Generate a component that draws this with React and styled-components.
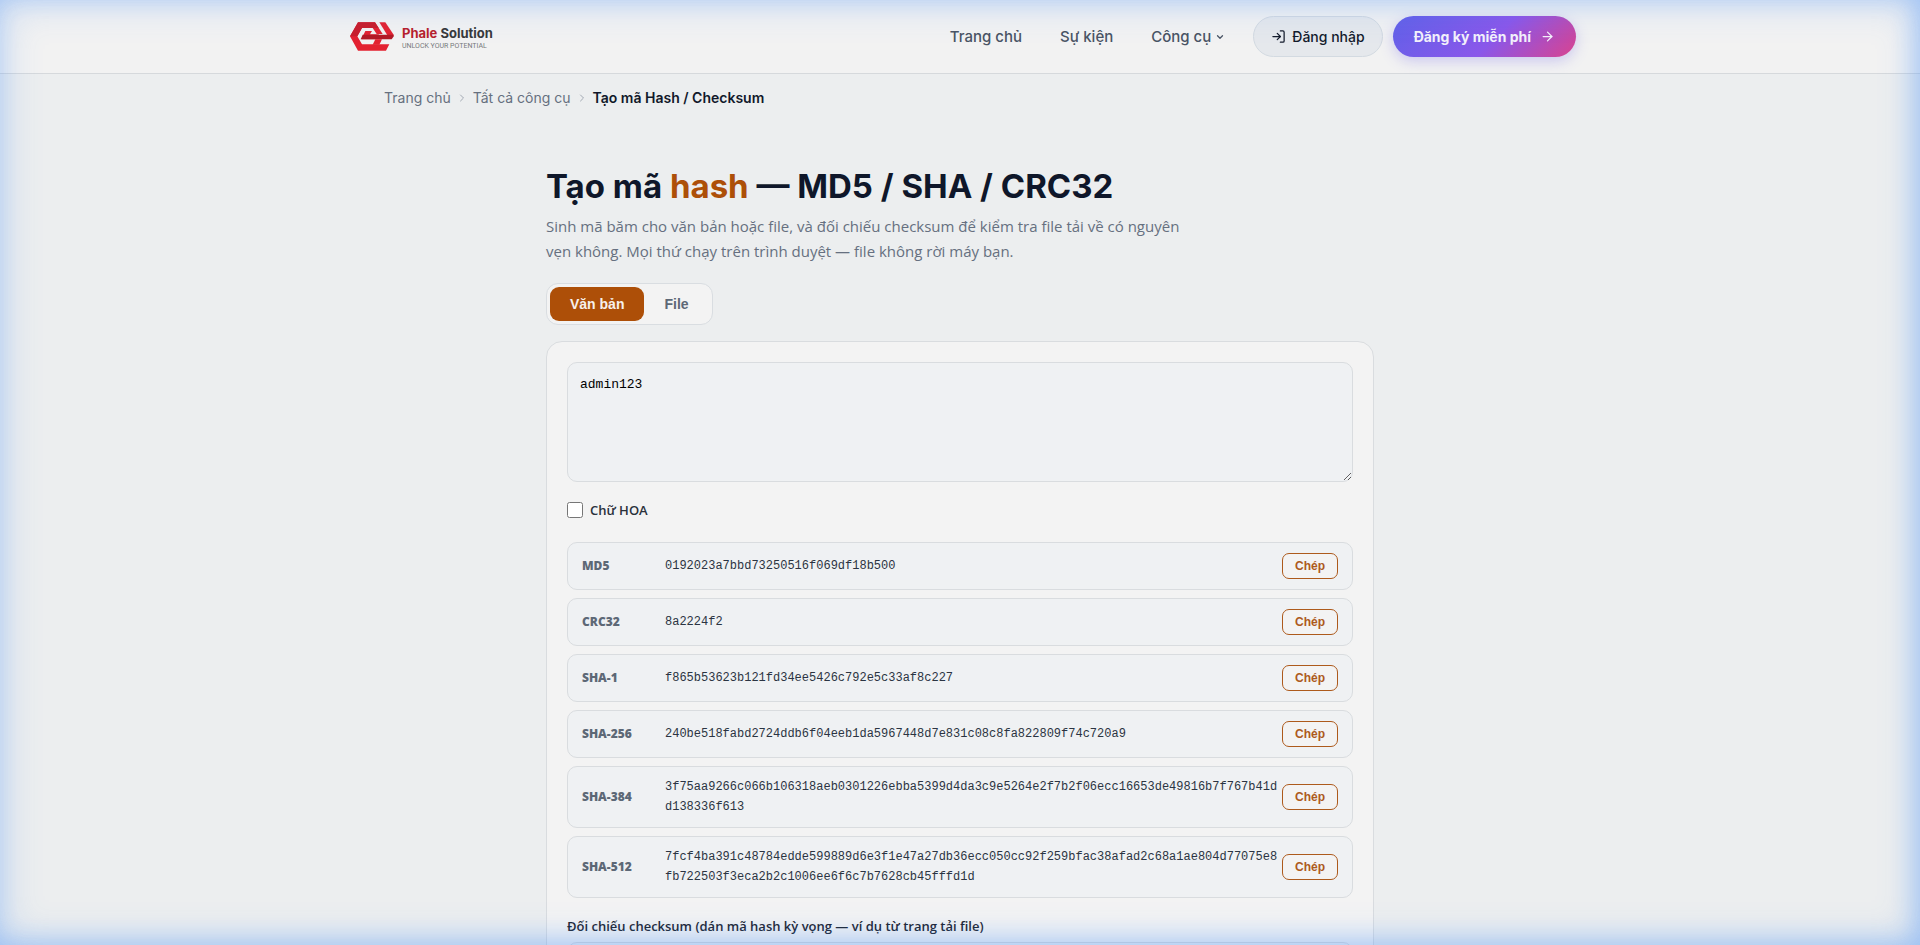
import React, { useState } from "react";
import styled, { createGlobalStyle, css } from "styled-components";
import { ArrowRight, ChevronDown, ChevronRight, LogIn } from "lucide-react";

const brand = "Inter, 'Open Sans', sans-serif";
const body = "'Open Sans', 'Noto Sans', sans-serif";
const arial = "'Liberation Sans', Arial, sans-serif";
const mono = "'Liberation Mono', 'DejaVu Sans Mono', monospace";

const GlobalStyle = createGlobalStyle`
  *, *::before, *::after { box-sizing: border-box; }
  body { margin: 0; background: #eceeef; color: #1e2530; font-family: ${body}; overflow: hidden; }
  a { color: inherit; text-decoration: none; }
`;

const Page = styled.div`
  height: 100vh;
  overflow: hidden;
`;

const Glow = styled.div`
  position: fixed;
  inset: 0;
  pointer-events: none;
  box-shadow:
    inset 0 0 40px rgba(66, 140, 246, 0.3),
    inset -6px -4px 24px rgba(76, 148, 250, 0.3);
`;

const Header = styled.header`
  background: #f2f2f2;
  border-bottom: 1px solid #d6d9dc;
`;

const HeaderInner = styled.div`
  max-width: 1280px;
  height: 73px;
  margin: 0 auto;
  padding: 0 24px;
  display: flex;
  align-items: center;
  justify-content: space-between;
  font-family: ${brand};
`;

const Logo = styled.a`
  display: flex;
  align-items: center;
  gap: 8px;
  padding-left: 6px;
`;

const LogoText = styled.span`
  display: flex;
  flex-direction: column;
  gap: 2px;
  padding-top: 2px;
`;

const LogoName = styled.span`
  font: 700 13px/14px ${brand};
  color: #38393b;
  em { font-style: normal; color: #b81f2c; }
`;

const LogoTag = styled.span`
  font: 400 7px/8px Roboto, sans-serif;
  color: #77797c;
`;

const Nav = styled.nav`
  display: flex;
  align-items: center;
`;

const NavLink = styled.a`
  display: flex;
  align-items: center;
  gap: 4px;
  margin-right: 38px;
  font-size: 15px;
  font-weight: 500;
  color: #4a5464;
  &:last-of-type { margin-right: 28px; }
`;

const Pill = styled.button`
  height: 41px;
  display: flex;
  align-items: center;
  border-radius: 21px;
  font: 500 14px/20px ${brand};
  color: #141b2b;
  background: #e5e8ec;
  border: 1px solid #d3dae1;
  padding: 0 17px;
  gap: 6px;
  ${(p) => p.$primary && css`
    margin-left: 10px;
    border: 0;
    padding: 0 21px;
    gap: 9px;
    font-weight: 700;
    color: #f3f1fb;
    background: linear-gradient(135deg, #6161e8 0%, #8a57ea 55%, #d9438f 100%);
    box-shadow: 0 4px 14px rgba(99, 91, 235, 0.28);
  `}
`;

const Crumbs = styled.nav`
  max-width: 1200px;
  margin: 0 auto;
  padding: 14px 24px;
  display: flex;
  align-items: center;
  gap: 5px;
  font: 400 14px/20px ${brand};
  color: #66707f;
  svg { color: #a2a9b3; }
  strong { font-weight: 600; color: #11182a; }
`;

const Main = styled.main`
  max-width: 876px;
  margin: 0 auto;
  padding: 44px 24px 0;
`;

const Title = styled.h1`
  margin: 0;
  font: 700 33px/40px ${brand};
  color: #0f172a;
  em { font-style: normal; color: #ad4f08; }
`;

const Lead = styled.p`
  max-width: 660px;
  margin: 8px 0 19px;
  font-size: 15px;
  line-height: 25px;
  color: #667080;
`;

const Tabs = styled.div`
  display: inline-flex;
  padding: 3px;
  border: 1px solid #d9dde1;
  border-radius: 12px;
  background: #f3f3f3;
`;

const Tab = styled.button`
  height: 34px;
  padding: 0 20px;
  border: 0;
  border-radius: 9px;
  font: 700 14px/20px ${arial};
  color: ${(p) => (p.$active ? "#f7f1ec" : "#5d6876")};
  background: ${(p) => (p.$active ? "#ad4f08" : "transparent")};
`;

const Card = styled.section`
  margin-top: 16px;
  padding: 20px;
  border: 1px solid #d9dcdf;
  border-radius: 16px;
  background: #f3f3f3;
`;

const TextBox = styled.textarea`
  display: block;
  width: 100%;
  height: 120px;
  padding: 12px;
  border: 1px solid #d9dcdf;
  border-radius: 10px;
  background: #eff1f3;
  font: 400 13px/20px ${mono};
  color: #000;
  resize: vertical;
  outline: 0;
`;

const CheckLabel = styled.label`
  display: flex;
  align-items: center;
  gap: 7px;
  margin: 18px 0 22px;
  font-size: 13px;
  font-weight: 600;
  line-height: 20px;
  color: #2a313c;
  input { width: 16px; height: 16px; margin: 0; }
`;

const List = styled.div`
  display: flex;
  flex-direction: column;
  gap: 8px;
`;

const Row = styled.div`
  display: grid;
  grid-template-columns: 83px 1fr auto;
  align-items: center;
  padding: 10px 14px;
  border: 1px solid #d9dcdf;
  border-radius: 10px;
  background: #eff1f3;
`;

const Algo = styled.span`
  font-size: 12px;
  font-weight: 800;
  line-height: 20px;
  color: #5d6876;
`;

const Hash = styled.code`
  font: 400 12px/20px ${mono};
  color: #2b3442;
  word-break: break-all;
`;

const Copy = styled.button`
  width: 56px;
  height: 26px;
  padding: 0;
  border: 1px solid #ad5a1c;
  border-radius: 7px;
  background: #f3f3f3;
  font: 700 12px/16px ${arial};
  color: #ad5a1c;
`;

const FieldLabel = styled.label`
  display: block;
  margin: 18px 0 6px;
  font-size: 13px;
  font-weight: 600;
  line-height: 20px;
`;

const Field = styled.input`
  width: 100%;
  height: 44px;
  padding: 0 12px;
  border: 1px solid #d9dcdf;
  border-radius: 10px;
  background: #eff1f3;
  font: 400 13px/20px ${mono};
`;

const hashes = [
  ["MD5", "0192023a7bbd73250516f069df18b500"],
  ["CRC32", "8a2224f2"],
  ["SHA-1", "f865b53623b121fd34ee5426c792e5c33af8c227"],
  ["SHA-256", "240be518fabd2724ddb6f04eeb1da5967448d7e831c08c8fa822809f74c720a9"],
  ["SHA-384", "3f75aa9266c066b106318aeb0301226ebba5399d4da3c9e5264e2f7b2f06ecc16653de49816b7f767b41dd138336f613"],
  ["SHA-512", "7fcf4ba391c48784edde599889d6e3f1e47a27db36ecc050cc92f259bfac38afad2c68a1ae804d77075e8fb722503f3eca2b2c1006ee6f6c7b7628cb45fffd1d"],
];

function LogoMark() {
  return (
    <svg width="44" height="29" viewBox="0 0 132 87" aria-hidden="true">
      <path d="M24 1H75L98 36H80L68 18H36L22 43L36 67H118L108 86H24L0 43Z" fill="#e32231" />
      <path d="M24 1H75L86 18H36L22 43H0Z" fill="#c91d2b" />
      <path d="M88 1H106L132 40H112Z" fill="#e32231" />
      <path d="M46 27H66L60 37H86L92 52H34Z" fill="#e32231" />
      <path d="M38 38H130L132 42L125 52H32Z" fill="#b31925" />
      <path d="M76 52H96L88 68H68Z" fill="#e32231" />
    </svg>
  );
}

export default function App() {
  const [text, setText] = useState("admin123");
  return (
    <Page>
      <GlobalStyle />
      <Header>
        <HeaderInner>
          <Logo href="#">
            <LogoMark />
            <LogoText>
              <LogoName><em>Phale</em> Solution</LogoName>
              <LogoTag>UNLOCK YOUR POTENTIAL</LogoTag>
            </LogoText>
          </Logo>
          <Nav>
            <NavLink href="#">Trang chủ</NavLink>
            <NavLink href="#">Sự kiện</NavLink>
            <NavLink href="#">Công cụ <ChevronDown size={10} strokeWidth={3} /></NavLink>
            <Pill><LogIn size={15} />Đăng nhập</Pill>
            <Pill $primary>Đăng ký miễn phí<ArrowRight size={15} /></Pill>
          </Nav>
        </HeaderInner>
      </Header>
      <Crumbs>
        <a href="#">Trang chủ</a>
        <ChevronRight size={12} />
        <a href="#">Tất cả công cụ</a>
        <ChevronRight size={12} />
        <strong>Tạo mã Hash / Checksum</strong>
      </Crumbs>
      <Main>
        <Title>Tạo mã <em>hash</em> — MD5 / SHA / CRC32</Title>
        <Lead>
          Sinh mã băm cho văn bản hoặc file, và đối chiếu checksum để kiểm tra file tải về có nguyên
          vẹn không. Mọi thứ chạy trên trình duyệt — file không rời máy bạn.
        </Lead>
        <Tabs>
          <Tab $active>Văn bản</Tab>
          <Tab>File</Tab>
        </Tabs>
        <Card>
          <TextBox aria-label="Văn bản" value={text} onChange={(e) => setText(e.target.value)} />
          <CheckLabel><input type="checkbox" />Chữ HOA</CheckLabel>
          <List>
            {hashes.map(([name, value]) => (
              <Row key={name}>
                <Algo>{name}</Algo>
                <Hash>{value}</Hash>
                <Copy>Chép</Copy>
              </Row>
            ))}
          </List>
          <FieldLabel htmlFor="expected">Đối chiếu checksum (dán mã hash kỳ vọng — ví dụ từ trang tải file)</FieldLabel>
          <Field id="expected" />
        </Card>
      </Main>
      <Glow />
    </Page>
  );
}
